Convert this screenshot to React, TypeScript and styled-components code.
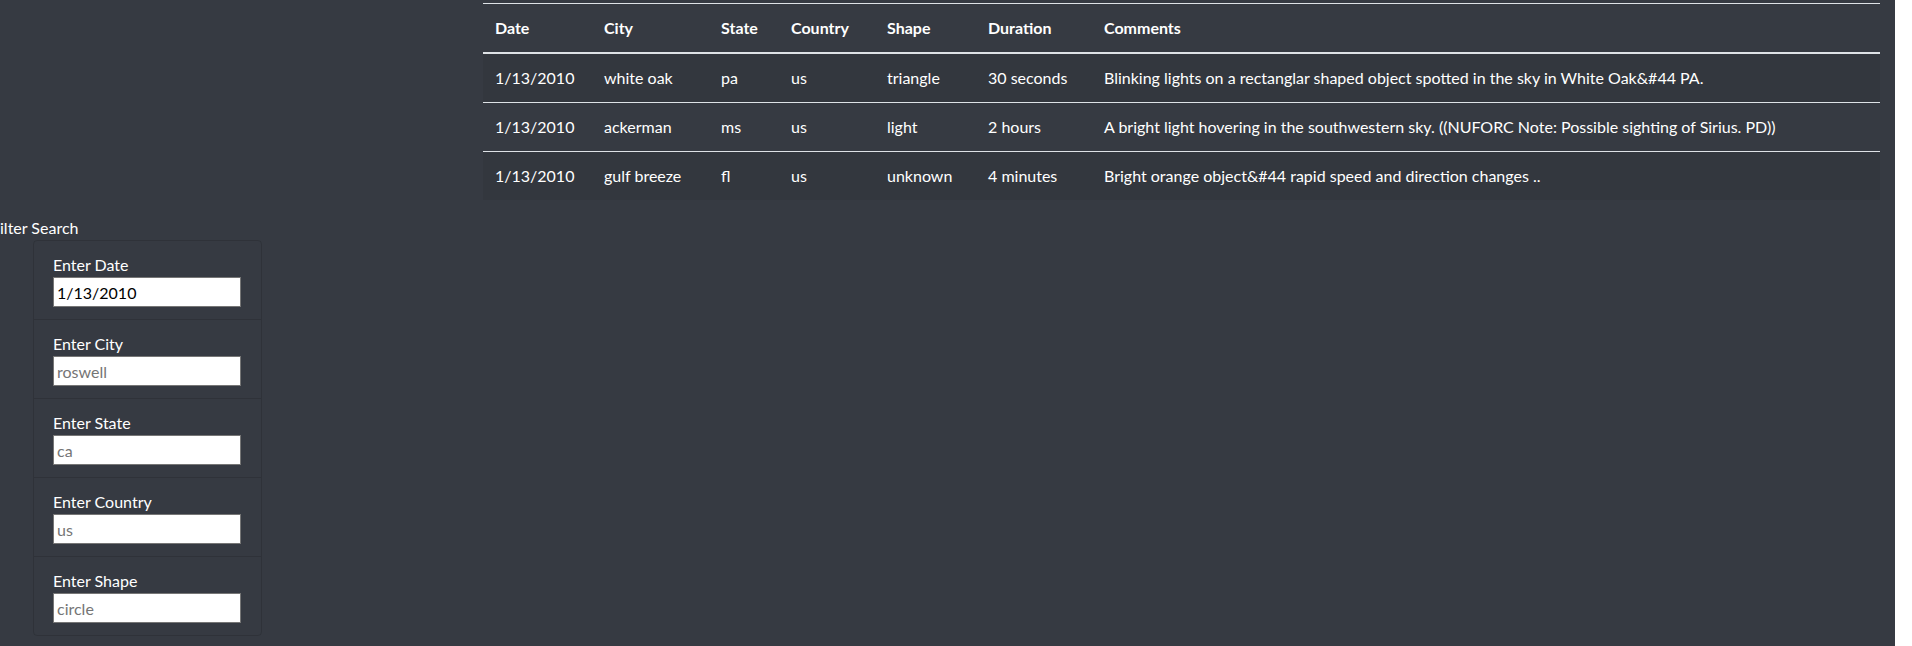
import styled, { createGlobalStyle } from "styled-components";

type Sighting = {
  datetime: string;
  city: string;
  state: string;
  country: string;
  shape: string;
  durationMinutes: string;
  comments: string;
};

const sightings: Sighting[] = [
  {
    datetime: "1/13/2010",
    city: "white oak",
    state: "pa",
    country: "us",
    shape: "triangle",
    durationMinutes: "30 seconds",
    comments: "Blinking lights on a rectanglar shaped object spotted in the sky in White Oak&#44 PA.",
  },
  {
    datetime: "1/13/2010",
    city: "ackerman",
    state: "ms",
    country: "us",
    shape: "light",
    durationMinutes: "2 hours",
    comments: "A bright light hovering in the southwestern sky. ((NUFORC Note: Possible sighting of Sirius. PD))",
  },
  {
    datetime: "1/13/2010",
    city: "gulf breeze",
    state: "fl",
    country: "us",
    shape: "unknown",
    durationMinutes: "4 minutes",
    comments: "Bright orange object&#44 rapid speed and direction changes ..",
  },
];

// column widths measured from the screenshot, Comments takes the rest
const columns = [
  { label: "Date", width: 109 },
  { label: "City", width: 117 },
  { label: "State", width: 70 },
  { label: "Country", width: 96 },
  { label: "Shape", width: 101 },
  { label: "Duration", width: 116 },
  { label: "Comments", width: undefined },
];

const filters = [
  { id: "datetime", label: "Enter Date", placeholder: "1/13/2010", value: "1/13/2010" },
  { id: "city", label: "Enter City", placeholder: "roswell" },
  { id: "state", label: "Enter State", placeholder: "ca" },
  { id: "country", label: "Enter Country", placeholder: "us" },
  { id: "shape", label: "Enter Shape", placeholder: "circle" },
];

export default function App() {
  return (
    <>
      <GlobalStyle />
      <SPage>
        <STable>
          <thead>
            <tr>
              {columns.map(({ label, width }) => (
                <SHeadCell key={label} $width={width}>
                  {label}
                </SHeadCell>
              ))}
            </tr>
          </thead>
          <tbody>
            {sightings.map((s, i) => (
              <SRow key={i}>
                <SCell>{s.datetime}</SCell>
                <SCell>{s.city}</SCell>
                <SCell>{s.state}</SCell>
                <SCell>{s.country}</SCell>
                <SCell>{s.shape}</SCell>
                <SCell>{s.durationMinutes}</SCell>
                <SCell>{s.comments}</SCell>
              </SRow>
            ))}
          </tbody>
        </STable>

        <SFilterTitle>Filter Search</SFilterTitle>
        <SCard>
          {filters.map(({ id, label, placeholder, value }) => (
            <SFilterItem key={id}>
              <SLabel htmlFor={id}>{label}</SLabel>
              <SInput id={id} type="text" placeholder={placeholder} defaultValue={value} />
            </SFilterItem>
          ))}
        </SCard>
      </SPage>
    </>
  );
}

const GlobalStyle = createGlobalStyle`
  html, body {
    margin: 0;
    background: #ffffff;
  }
  body {
    font-family: Lato, "Liberation Sans", sans-serif;
    font-size: 16px;
    line-height: 24px;
    color: #ffffff;
  }
`;

const SPage = styled.div`
  width: 1895px;
  min-height: 646px;
  padding-top: 3px;
  box-sizing: border-box;
  background: #363a42;
  overflow: hidden;
`;

const STable = styled.table`
  width: 1397px;
  margin: 0 15px 16px 483px;
  border-collapse: collapse;
  table-layout: fixed;
  color: #ffffff;
`;

const SHeadCell = styled.th<{ $width?: number }>`
  width: ${({ $width }) => ($width ? `${$width}px` : "auto")};
  padding: 12px;
  box-sizing: border-box;
  text-align: left;
  font-weight: 700;
  border-top: 1px solid #dee2e6;
  border-bottom: 2px solid #dee2e6;
`;

const SRow = styled.tr`
  &:nth-child(odd) {
    background: rgba(0, 0, 0, 0.05);
  }
`;

const SCell = styled.td`
  padding: 12px;
  border-top: 1px solid #dee2e6;
  white-space: nowrap;
`;

const SFilterTitle = styled.div`
  margin-left: -9px;
  white-space: nowrap;
`;

const SCard = styled.div`
  width: 229px;
  margin-left: 33px;
  box-sizing: border-box;
  border: 1px solid rgba(0, 0, 0, 0.125);
  border-radius: 4px;
`;

const SFilterItem = styled.div`
  padding: 12px 19px;
  border-bottom: 1px solid rgba(0, 0, 0, 0.125);
  &:last-child {
    border-bottom: none;
  }
`;

const SLabel = styled.label`
  display: block;
`;

const SInput = styled.input`
  display: block;
  width: 188px;
  height: 30px;
  box-sizing: border-box;
  padding: 1px 3px;
  border: 1px solid #767676;
  border-radius: 0;
  background: #ffffff;
  color: #000000;
  font-family: inherit;
  font-size: 16px;
  &::placeholder {
    color: #757575;
  }
`;
